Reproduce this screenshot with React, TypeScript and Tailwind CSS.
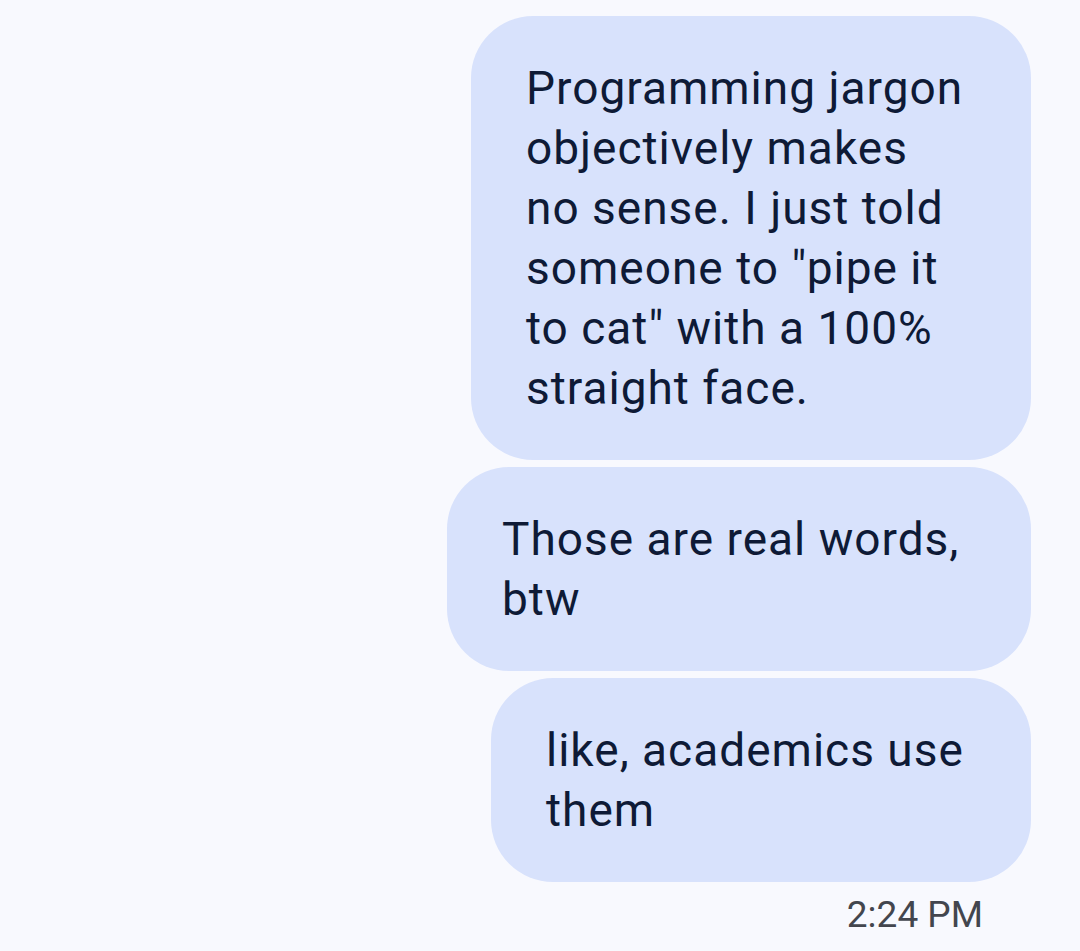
import React from "react";

const font = { fontFamily: "Roboto, 'Noto Sans', sans-serif" };

export default function App() {
  return (
    <div className="min-h-[951px] w-[1080px] bg-[#f8f9fe] pt-4" style={font}>
      <div className="flex flex-col items-end gap-[7px] pr-[49px]">
        <div className="w-[560px] rounded-[62px] bg-[#d8e2fc] pb-[42px] pl-[55px] pt-[42px] text-[46px] leading-[60px] tracking-[1px] text-[#0e1a36]">
          Programming jargon
          <br />
          objectively makes
          <br />
          no sense. I just told
          <br />
          someone to "pipe it
          <br />
          to cat" with a 100%
          <br />
          straight face.
        </div>
        <div className="w-[584px] rounded-[62px] bg-[#d8e2fc] pb-[42px] pl-[55px] pt-[42px] text-[46px] leading-[60px] tracking-[1px] text-[#0e1a36]">
          Those are real words,
          <br />
          btw
        </div>
        <div className="w-[540px] rounded-[62px] bg-[#d8e2fc] pb-[42px] pl-[55px] pt-[42px] text-[46px] leading-[60px] tracking-[1px] text-[#0e1a36]">
          like, academics use
          <br />
          them
        </div>
        <div className="mr-[48px] mt-[4px] text-[37px] leading-[44px] text-[#43464e]">2:24 PM</div>
      </div>
    </div>
  );
}
